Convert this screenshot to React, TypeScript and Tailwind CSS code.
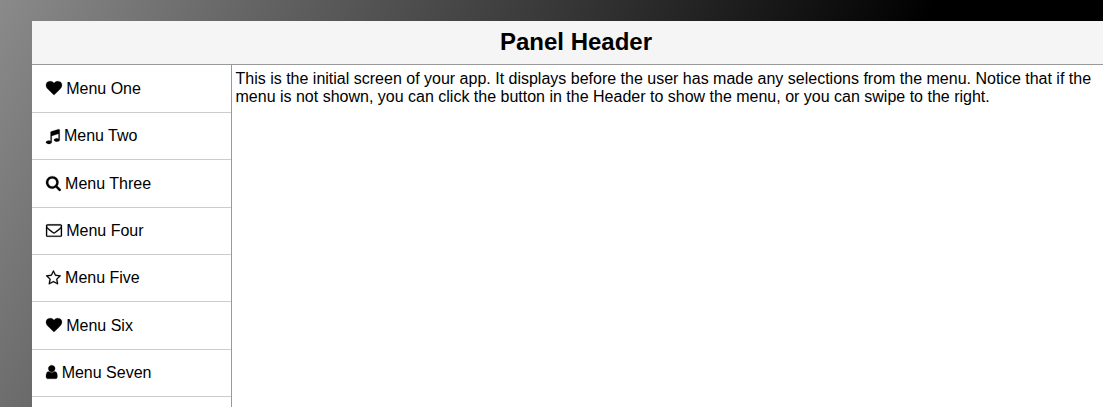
type Glyph = { left: number; width: number; path: string };

const HEART: Glyph = {
  left: 0,
  width: 1792,
  path: 'M896 1664q-26 0-44-18l-624-602q-10-8-27.5-26t-55.5-65.5-68-97.5-53.5-121-23.5-138q0-220 127-344t351-124q62 0 126.5 21.5t120 58 95.5 68.5 76 68q36-36 76-68t95.5-68.5 120-58 126.5-21.5q224 0 351 124t127 344q0 221-229 450l-623 600q-18 18-44 18z',
};
const MUSIC: Glyph = {
  left: 128,
  width: 1536,
  path: 'M1664 224v1120q0 50-34 89t-86 60.5-103.5 32-96.5 10.5-96.5-10.5-103.5-32-86-60.5-34-89 34-89 86-60.5 103.5-32 96.5-10.5q105 0 192 39v-537l-768 237v709q0 50-34 89t-86 60.5-103.5 32-96.5 10.5-96.5-10.5-103.5-32-86-60.5-34-89 34-89 86-60.5 103.5-32 96.5-10.5q105 0 192 39v-967q0-31 19-56.5t49-35.5l832-256q12-4 28-4 40 0 68 28t28 68z',
};
const SEARCH: Glyph = {
  left: 64,
  width: 1664,
  path: 'M1216 832q0-185-131.5-316.5t-316.5-131.5-316.5 131.5-131.5 316.5 131.5 316.5 316.5 131.5 316.5-131.5 131.5-316.5zm512 832q0 52-38 90t-90 38q-54 0-90-38l-343-342q-179 124-399 124-143 0-273.5-55.5t-225-150-150-225-55.5-273.5 55.5-273.5 150-225 225-150 273.5-55.5 273.5 55.5 225 150 150 225 55.5 273.5q0 220-124 399l343 343q37 37 37 90z',
};
const ENVELOPE: Glyph = {
  left: 0,
  width: 1792,
  path: 'M1664 1504v-768q-32 36-69 66-268 206-426 338-51 43-83 67t-86.5 48.5-102.5 24.5h-2q-48 0-102.5-24.5t-86.5-48.5-83-67q-158-132-426-338-37-30-69-66v768q0 13 9.5 22.5t22.5 9.5h1472q13 0 22.5-9.5t9.5-22.5zm0-1051v-24.5l-.5-13-3-12.5-5.5-9-9-7.5-14-2.5h-1472q-13 0-22.5 9.5t-9.5 22.5q0 168 147 284 193 152 401 317 6 5 35 29.5t46 37.5 44.5 31.5 50.5 27.5 43 9h2q20 0 43-9t50.5-27.5 44.5-31.5 46-37.5 35-29.5q208-165 401-317 54-43 100.5-115.5t46.5-131.5zm128-37v1088q0 66-47 113t-113 47h-1472q-66 0-113-47t-47-113v-1088q0-66 47-113t113-47h1472q66 0 113 47t47 113z',
};
const STAR: Glyph = {
  left: 64,
  width: 1664,
  path: 'M1201 1004l306-297-422-62-189-382-189 382-422 62 306 297-73 421 378-199 377 199zm527-357q0 22-26 48l-363 354 86 500q1 7 1 20 0 50-41 50-19 0-40-12l-449-236-449 236q-22 12-40 12-21 0-31.5-14.5t-10.5-35.5q0-6 2-20l86-500-364-354q-25-27-25-48 0-37 56-46l502-73 225-455q19-41 49-41t49 41l225 455 502 73q56 9 56 46z',
};
const USER: Glyph = {
  left: 256,
  width: 1280,
  path: 'M1536 1399q0 109-62.5 187t-150.5 78h-854q-88 0-150.5-78t-62.5-187q0-85 8.5-160.5t31.5-152 58.5-131 94-89 134.5-34.5q131 128 313 128t313-128q76 0 134.5 34.5t94 89 58.5 131 31.5 152 8.5 160.5zm-256-887q0 159-112.5 271.5t-271.5 112.5-271.5-112.5-112.5-271.5 112.5-271.5 271.5-112.5 271.5 112.5 112.5 271.5z',
};

const items: { label: string; glyph: Glyph }[] = [
  { label: 'Menu One', glyph: HEART },
  { label: 'Menu Two', glyph: MUSIC },
  { label: 'Menu Three', glyph: SEARCH },
  { label: 'Menu Four', glyph: ENVELOPE },
  { label: 'Menu Five', glyph: STAR },
  { label: 'Menu Six', glyph: HEART },
  { label: 'Menu Seven', glyph: USER },
];

function Icon({ glyph }: { glyph: Glyph }) {
  return (
    <svg
      aria-hidden="true"
      className="mr-[0.25px] inline-block h-4 overflow-visible align-[-2.3px]"
      style={{ width: (glyph.width / 1792) * 16 }}
      viewBox={`${glyph.left} 0 ${glyph.width} 1792`}
      fill="currentColor"
      stroke="currentColor"
      strokeWidth={24}
    >
      <path d={glyph.path} />
    </svg>
  );
}

export default function App() {
  return (
    <div className="h-[407px] w-full overflow-hidden bg-[linear-gradient(115deg,#8a8a8a_0px,#000000_850px)] pt-[21px] pl-8 font-['Liberation_Sans',Arial,sans-serif] text-base text-black">
      <div className="flex h-full flex-col bg-white">
        <header className="flex h-11 shrink-0 items-center justify-center border-b border-[#999999] bg-[#f5f5f5] pb-0.5 pl-[17px]">
          <h1 className="text-2xl leading-7 font-bold">Panel Header</h1>
        </header>
        <div className="flex min-h-0 flex-1">
          <nav className="w-[200px] shrink-0 border-r border-[#999999] pt-[0.5px]">
            <ul>
              {items.map(({ label, glyph }) => (
                <li
                  key={label}
                  className="flex h-[47.36px] items-center border-b border-[#cccccc] pt-[0.4px] pl-[13.5px]"
                >
                  <a className="leading-[18px] whitespace-nowrap">
                    <Icon glyph={glyph} /> {label}
                  </a>
                </li>
              ))}
            </ul>
          </nav>
          <main className="min-w-0 flex-1 pr-1 pl-[3.5px] pt-[5px] leading-[18px]">
            <p>
              This is the initial screen of your app. It displays before the user has made any
              selections from the menu. Notice that if the menu is not shown, you can click the
              button in the Header to show the menu, or you can swipe to the right.
            </p>
          </main>
        </div>
      </div>
    </div>
  );
}
